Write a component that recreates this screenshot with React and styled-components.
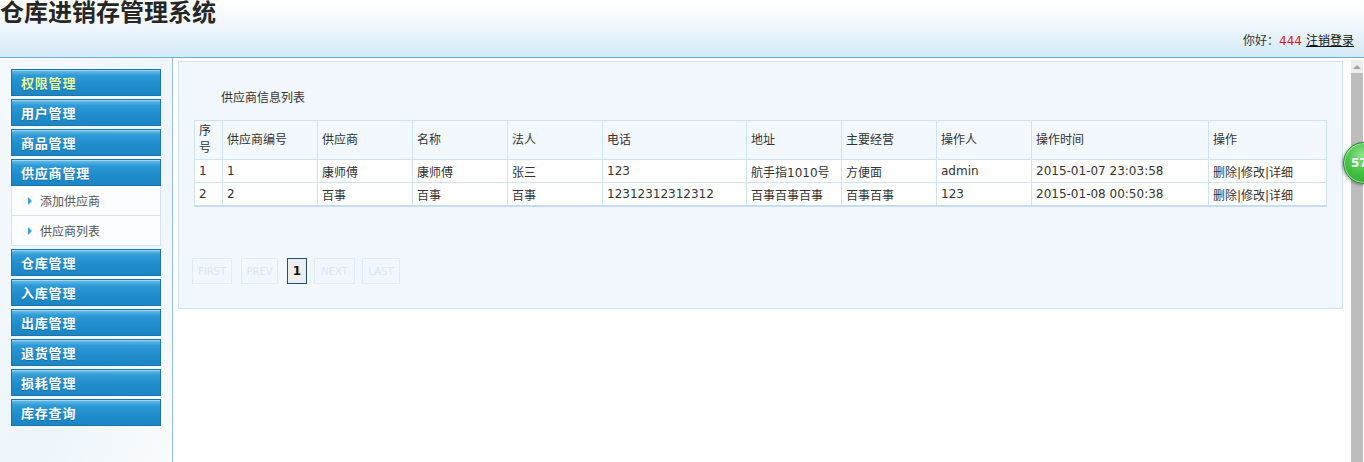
import React from "react";
import styled, { createGlobalStyle } from "styled-components";

const Global = createGlobalStyle`
  html, body { margin: 0; padding: 0; background: #fff; }
  body { font-family: "DejaVu Sans", "Noto Sans CJK SC", sans-serif; font-size: 12px; color: #333; overflow: hidden; }
`;

const Page = styled.div`
  width: 1364px;
  height: 462px;
  display: flex;
  flex-direction: column;
  position: relative;
  overflow: hidden;
`;

const Header = styled.header`
  height: 57px;
  border-bottom: 1px solid #6fb0d2;
  background: linear-gradient(to bottom, #ffffff 0%, #f2f8fc 40%, #d3e9f6 100%);
  display: flex;
  justify-content: space-between;
  align-items: flex-start;
  flex-shrink: 0;
`;

const Title = styled.h1`
  margin: -4px 0 0 0;
  font-family: "Noto Sans CJK SC", sans-serif;
  font-size: 24px;
  line-height: 30px;
  font-weight: 700;
  color: #262626;
`;

const Greeting = styled.div`
  margin-top: 31px;
  margin-right: 10px;
  font-family: "Noto Sans CJK SC", "DejaVu Sans", sans-serif;
  font-size: 12px;
  color: #333;
`;

const UserName = styled.span`
  color: #e0141e;
  font-family: "DejaVu Sans", sans-serif;
  margin-right: 4px;
`;

const Logout = styled.a`
  color: #111;
  text-decoration: underline;
`;

const Body = styled.div`
  flex: 1;
  display: flex;
  min-height: 0;
`;

const Sidebar = styled.nav`
  width: 173px;
  flex-shrink: 0;
  border-right: 1px solid #95bfd8;
  background: linear-gradient(to bottom right, #f4f9fd 0%, #eef6fb 60%, #f8fbfe 100%);
  padding-top: 11px;
  display: flex;
  flex-direction: column;
  gap: 3px;
  box-sizing: border-box;
`;

const MenuItem = styled.div`
  margin-left: 11px;
  width: 150px;
  height: 27px;
  box-sizing: border-box;
  border: 1px solid #1d74ab;
  background: linear-gradient(to bottom, #6cc0ec 0%, #2e9ad6 22%, #1f8ccb 60%, #1c86c4 100%);
  box-shadow: inset 0 1px 0 rgba(255,255,255,0.35);
  display: flex;
  align-items: center;
  padding-left: 9px;
  font-family: "Noto Sans CJK SC", sans-serif;
  font-weight: 700;
  font-size: 13px;
  letter-spacing: 0.8px;
  color: ${(p) => (p.$highlight ? "#e6f7a0" : "#ffffff")};
  text-shadow: 0 1px 0 rgba(0,60,110,0.35);
`;

const SubList = styled.div`
  margin-left: 11px;
  width: 150px;
  margin-top: -3px;
  display: flex;
  flex-direction: column;
  border-left: 1px solid #d5e2ec;
  border-right: 1px solid #d5e2ec;
  box-sizing: border-box;
  background: #fbfdfe;
`;

const SubItem = styled.div`
  height: 30px;
  box-sizing: border-box;
  border-bottom: 1px solid #d5e2ec;
  display: flex;
  align-items: center;
  padding-left: 16px;
  gap: 8px;
  font-family: "Noto Sans CJK SC", sans-serif;
  font-size: 12px;
  color: #555;
`;

const Arrow = styled.span`
  width: 0;
  height: 0;
  border-top: 4px solid transparent;
  border-bottom: 4px solid transparent;
  border-left: 4px solid #3f9fd0;
`;

const Main = styled.main`
  flex: 1;
  display: flex;
  min-width: 0;
`;

const Content = styled.div`
  flex: 1;
  padding: 3px 5px 0 5px;
`;

const Panel = styled.section`
  border: 1px solid #cfe3f2;
  background: #f1f7fd;
  padding: 25px 15px 24px 15px;
`;

const PanelTitle = styled.div`
  padding-left: 27px;
  height: 20px;
  line-height: 20px;
  margin-bottom: 13px;
  font-family: "Noto Sans CJK SC", sans-serif;
  font-size: 12px;
  color: #333;
`;

const Table = styled.table`
  width: 1132px;
  table-layout: fixed;
  border-collapse: collapse;
  border: 1px solid #c6ddef;
  border-bottom: 2px solid #c6ddef;
  font-size: 12px;
`;

const Th = styled.th`
  height: 38px;
  padding: 0 4px;
  border: 1px solid #cde2f3;
  background: #f2f8fd;
  text-align: left;
  font-weight: 400;
  color: #333;
  line-height: 17px;
  vertical-align: middle;
`;

const Td = styled.td`
  height: 22px;
  padding: 0 4px;
  border: 1px solid #cde2f3;
  background: #fff;
  color: #333;
  white-space: nowrap;
  overflow: hidden;
`;

const Pager = styled.div`
  margin-top: 51px;
  margin-left: -2px;
  display: flex;
`;

const PageBtn = styled.span`
  height: 26px;
  width: ${(p) => p.$w}px;
  margin-right: ${(p) => p.$gap}px;
  box-sizing: border-box;
  display: flex;
  align-items: center;
  justify-content: center;
  border: 1px solid ${(p) => (p.$current ? "#1f4f78" : "#e2ebf2")};
  background: ${(p) => (p.$current ? "#eeeeee" : "transparent")};
  color: ${(p) => (p.$current ? "#111" : "#dde6ed")};
  font-weight: ${(p) => (p.$current ? 700 : 400)};
  font-size: ${(p) => (p.$current ? "12px" : "10px")};
`;

const Scrollbar = styled.div`
  width: 17px;
  flex-shrink: 0;
  padding-left: 3px;
  padding-right: 2px;
  padding-top: 2px;
  box-sizing: border-box;
  display: flex;
  flex-direction: column;
`;

const ScrollUp = styled.div`
  height: 13px;
  background: #ededed;
  display: flex;
  align-items: center;
  justify-content: center;
  &::after {
    content: "";
    border-left: 4px solid transparent;
    border-right: 4px solid transparent;
    border-bottom: 4px solid #a3a3a3;
  }
`;

const ScrollThumb = styled.div`
  flex: 1;
  background: #bdbdbd;
`;

const Badge = styled.div`
  position: absolute;
  left: 1343px;
  top: 142px;
  width: 42px;
  height: 42px;
  border-radius: 50%;
  box-sizing: border-box;
  border: 1px solid #2d8a2d;
  background: radial-gradient(circle at 45% 30%, #8de38a 0%, #47c348 45%, #25a027 100%);
  box-shadow: -1px 1px 3px rgba(0,0,0,0.35), inset 0 0 0 1px rgba(255,255,255,0.5);
  color: #fff;
  font-family: "DejaVu Sans", sans-serif;
  font-weight: 700;
  font-size: 12px;
  display: flex;
  align-items: center;
  padding-left: 7px;
`;

const menusTop = [
  { t: "权限管理", h: true },
  { t: "用户管理" },
  { t: "商品管理" },
  { t: "供应商管理" },
];
const menusBottom = ["仓库管理", "入库管理", "出库管理", "退货管理", "损耗管理", "库存查询"];

const cols = [28, 95, 95, 95, 95, 144, 95, 95, 95, 177, 118];
const heads = ["序号", "供应商编号", "供应商", "名称", "法人", "电话", "地址", "主要经营", "操作人", "操作时间", "操作"];
const rows = [
  ["1", "1", "康师傅", "康师傅", "张三", "123", "航手指1010号", "方便面", "admin", "2015-01-07 23:03:58", "删除|修改|详细"],
  ["2", "2", "百事", "百事", "百事", "12312312312312", "百事百事百事", "百事百事", "123", "2015-01-08 00:50:38", "删除|修改|详细"],
];

export default function App() {
  return (
    <Page>
      <Global />
      <Header>
        <Title>仓库进销存管理系统</Title>
        <Greeting>
          你好：<UserName>444</UserName>
          <Logout>注销登录</Logout>
        </Greeting>
      </Header>
      <Body>
        <Sidebar>
          {menusTop.map((m) => (
            <MenuItem key={m.t} $highlight={m.h}>{m.t}</MenuItem>
          ))}
          <SubList>
            <SubItem><Arrow />添加供应商</SubItem>
            <SubItem><Arrow />供应商列表</SubItem>
          </SubList>
          {menusBottom.map((m) => (
            <MenuItem key={m}>{m}</MenuItem>
          ))}
        </Sidebar>
        <Main>
          <Content>
            <Panel>
              <PanelTitle>供应商信息列表</PanelTitle>
              <Table>
                <colgroup>
                  {cols.map((w, i) => <col key={i} style={{ width: w }} />)}
                </colgroup>
                <thead>
                  <tr>{heads.map((h) => <Th key={h}>{h}</Th>)}</tr>
                </thead>
                <tbody>
                  {rows.map((r, i) => (
                    <tr key={i}>{r.map((c, j) => <Td key={j}>{c}</Td>)}</tr>
                  ))}
                </tbody>
              </Table>
              <Pager>
                <PageBtn $w={40} $gap={9}>FIRST</PageBtn>
                <PageBtn $w={37} $gap={9}>PREV</PageBtn>
                <PageBtn $current $w={20} $gap={7}>1</PageBtn>
                <PageBtn $w={41} $gap={7}>NEXT</PageBtn>
                <PageBtn $w={38} $gap={0}>LAST</PageBtn>
              </Pager>
            </Panel>
          </Content>
          <Scrollbar>
            <ScrollUp />
            <ScrollThumb />
          </Scrollbar>
        </Main>
      </Body>
      <Badge>57</Badge>
    </Page>
  );
}
